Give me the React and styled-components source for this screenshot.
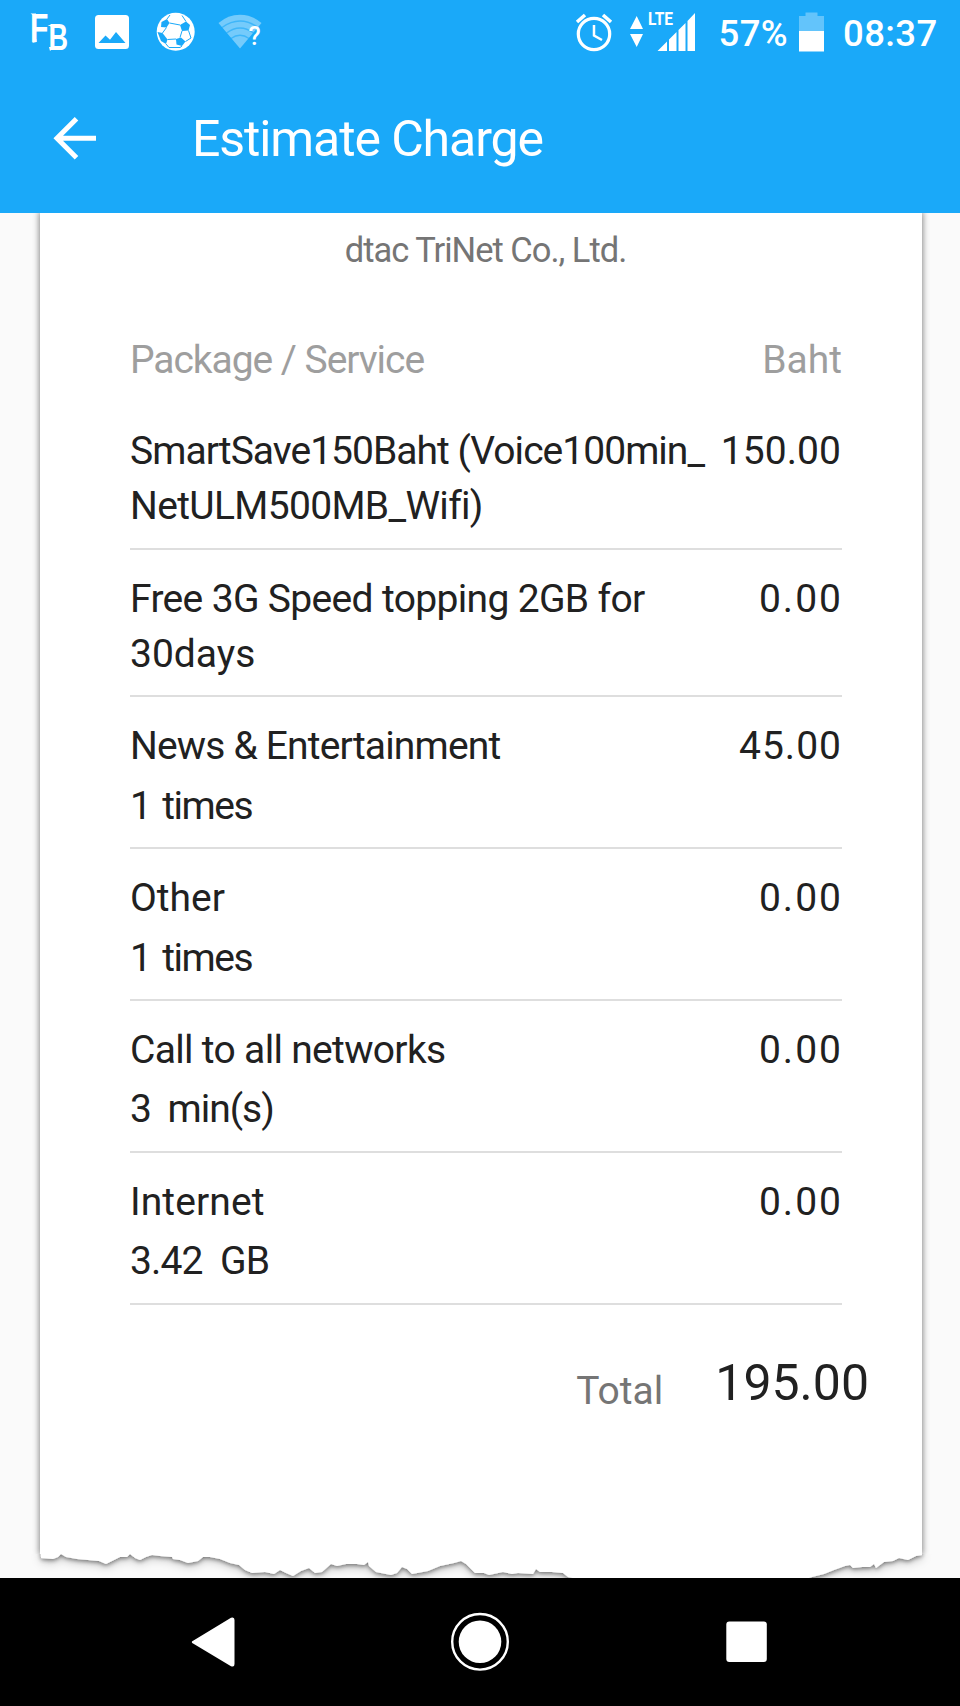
import React from "react";
import styled, { createGlobalStyle } from "styled-components";

const GlobalStyle = createGlobalStyle`
  * {
    box-sizing: border-box;
  }
  body {
    margin: 0;
    background: #fafafa;
    font-family: Roboto, "Liberation Sans", sans-serif;
  }
`;

const BLUE = "#1aa9f9";

const Screen = styled.div`
  width: 960px;
  height: 1706px;
  display: flex;
  flex-direction: column;
  overflow: hidden;
`;

const Header = styled.header`
  height: 213px;
  flex-shrink: 0;
  background: ${BLUE};
  color: white;
`;

const StatusBar = styled.div`
  height: 66px;
  display: flex;
  padding-left: 28px;
`;

const StatusIcon = styled.svg`
  width: ${({ $width }) => $width}px;
  height: 66px;
  flex-shrink: 0;
  margin-left: ${({ $push = false }) => ($push ? "auto" : "0")};
`;

const StatusText = styled.div`
  width: ${({ $width }) => $width}px;
  padding-left: ${({ $indent }) => $indent}px;
  font-size: 36.5px;
  font-weight: 500;
  line-height: 67px;
  letter-spacing: ${({ $tracking = 0 }) => $tracking}px;
  white-space: nowrap;
`;

const AppBar = styled.div`
  height: 147px;
  display: flex;
  align-items: flex-start;
  padding: 42px 0 0 47px;
`;

const BackIcon = styled.svg`
  width: 56px;
  height: 60px;
`;

const Title = styled.h1`
  margin: 1px 0 0 89px;
  font-size: 50px;
  font-weight: 400;
  line-height: 60px;
  letter-spacing: -1.1px;
`;

const Content = styled.main`
  flex: 1;
  min-height: 0;
  overflow: hidden;
  background: #fafafa;
`;

const Receipt = styled.section`
  height: 1341px;
  margin: 0 38px 0 40px;
  padding: 0 80px 0 90px;
  background: white;
  box-shadow: 0 0 6px 1px rgba(0, 0, 0, 0.45);
  clip-path: inset(0 -12px 0 -12px);
`;

const TornEdge = styled.svg`
  display: block;
  width: 960px;
  height: 24px;
`;

const Company = styled.div`
  padding-top: 15px;
  margin-right: 1px;
  text-align: center;
  font-size: 34.5px;
  line-height: 44px;
  letter-spacing: -1px;
  color: #757575;
`;

const ColumnTitles = styled.div`
  display: flex;
  justify-content: space-between;
  margin-top: 60px;
  height: 70.2px;
  font-size: 39px;
  line-height: 56px;
  color: #9e9e9e;
`;

const Row = styled.div`
  display: flex;
  justify-content: space-between;
  padding: 22px 0 13.6px;
  border-bottom: 2px solid #dedede;
  font-size: 39px;
  line-height: 55px;
  color: #212121;
`;

const Line = styled.div`
  letter-spacing: ${({ $tracking = 0 }) => $tracking}px;
  white-space: nowrap;
`;

const Usage = styled(Line)`
  margin-top: 4.3px;
  word-spacing: ${({ $gap = 0 }) => $gap}px;
  white-space: pre;
`;

const Amount = styled(Line)`
  margin-right: ${({ $tracking = 0 }) => 1 - $tracking}px;
`;

const TotalRow = styled.div`
  display: flex;
  justify-content: flex-end;
  align-items: flex-start;
  margin: 43.4px -27px 0 0;
  line-height: 70px;
`;

const TotalLabel = styled.span`
  padding-top: 8px;
  font-size: 39px;
  color: #757575;
`;

const TotalValue = styled.span`
  margin-left: 52px;
  font-size: 50px;
  color: #212121;
`;

const NavBar = styled.nav`
  height: 128px;
  flex-shrink: 0;
  display: flex;
  align-items: center;
  gap: 207px;
  padding-left: 183px;
  background: black;
`;

const NavIcon = styled.svg`
  width: 60px;
  height: 60px;
`;

const items = [
  {
    lines: [
      { text: "SmartSave150Baht (Voice100min_", tracking: -0.97 },
      { text: "NetULM500MB_Wifi)", tracking: -0.66 },
    ],
    amount: "150.00",
    amountTracking: 0.1,
  },
  {
    lines: [
      { text: "Free 3G Speed topping 2GB for", tracking: -0.66 },
      { text: "30days" },
    ],
    amount: "0.00",
    amountTracking: 2,
  },
  {
    lines: [{ text: "News & Entertainment", tracking: -0.83 }],
    usage: { text: "1  times", tracking: -1.5, gap: -2.2 },
    amount: "45.00",
    amountTracking: 1,
  },
  {
    lines: [{ text: "Other" }],
    usage: { text: "1  times", tracking: -1.5, gap: -2.2 },
    amount: "0.00",
    amountTracking: 2,
  },
  {
    lines: [{ text: "Call to all networks", tracking: -0.68 }],
    usage: { text: "3  min(s)", tracking: -1, gap: -0.4 },
    amount: "0.00",
    amountTracking: 2,
  },
  {
    lines: [{ text: "Internet", tracking: 0.1 }],
    usage: { text: "3.42  GB", tracking: -0.9, gap: 0 },
    amount: "0.00",
    amountTracking: 2,
  },
];

// Bottom outline of the paper, left to right
const tornPoints =
  "41,8 53,9 58,7 61,4 66,7 77,9 88,10 99,11 106,14 114,10 120,7 127,7 130,4 135,8 140,10 146,7 152,5 160,6 172,7 173,9 180,10 188,13 198,11 203,7 210,7 220,9 230,13 239,15 245,20 252,23 265,22 274,24 280,20 286,23 293,26 301,21 309,18 315,23 322,22 331,14 337,16 346,14 357,14 364,15 368,12 369,16 376,22 391,25 397,23 402,17 407,19 412,24 428,21 440,16 454,13 461,11 466,14 475,23 484,23 489,25 503,22 512,24 518,23 533,24 536,19 540,22 552,22 563,23 568,27 600,34 790,34 812,27 824,24 834,20 845,16 850,15 853,18 862,17 870,17 874,14 876,18 884,12 893,11 899,8 908,10 916,6 922,5";

const StatusIcons = () => (
  <>
    <StatusIcon $width={54} viewBox="28 0 54 66" fill="white">
      <text
        x="30"
        y="42"
        fontFamily="Liberation Sans"
        fontWeight="bold"
        fontSize="40"
        textLength="38"
        lengthAdjust="spacingAndGlyphs"
      >
        F<tspan dy="8" fontSize="36">B</tspan>
      </text>
      <path d="M30.5 13.5 H36 V17 Z M32 43 L36.5 39 V42 Z M47.5 25 H54 V28 Z M49 47 H54 L50 51 Z" />
    </StatusIcon>
    <StatusIcon $width={62} viewBox="82 0 62 66">
      <rect x="95" y="15" width="34" height="34" rx="3.5" fill="white" />
      <path d="M98.5 43 L105.5 35.5 L110 39.8 L116 32 L125.5 43 Z" fill={BLUE} />
    </StatusIcon>
    <StatusIcon $width={62} viewBox="144 0 62 66">
      <circle cx="175.7" cy="31.7" r="19" fill="white" />
      <g fill={BLUE}>
        <path d="M161.5 22 L167 19 L169.5 23 L166.5 27.5 L161 27 Z" />
        <path d="M180 25 L186 21.5 L190 25 L188.5 30.5 L182 31 Z" />
        <path d="M176 39 L181 37.5 L185.5 41.5 L182 46 L176.5 44.5 Z" />
        <path d="M157.5 32 L162.5 33 L167.5 39.5 L166 44 L161 41 Z" />
      </g>
      <path
        d="M169.5 23 L180 25 M182 31 L180 37.5 M176 39 L167.5 39.5 M162.5 33 L166.5 27.5 M167 19 L170 15 M182 15.5 L186 21.5 M185.5 41.5 L191 38 L188.5 30.5 M166 44 L169 47.5 H180 L182 46"
        fill="none"
        stroke={BLUE}
        strokeWidth="1"
      />
    </StatusIcon>
    <StatusIcon $width={66} viewBox="206 0 66 66">
      <path d="M240 48.5 L218.5 23 Q228 14.7 240 14.7 Q252 14.7 261.5 23 Z" fill="white" opacity="0.4" />
      <path
        d="M222 27.5 Q240 14.5 258 27.5 M226.5 33 Q240 23 253.5 33 M231 38.5 Q240 32 249 38.5"
        fill="none"
        stroke={BLUE}
        strokeOpacity="0.6"
        strokeWidth="1.5"
      />
      <text x="248.5" y="44.5" fontSize="25" fontWeight="500" fontFamily="Roboto" fill="white">?</text>
    </StatusIcon>
    <StatusIcon $width={46} $push viewBox="572 0 46 66" fill="none" stroke="white">
      <circle cx="594" cy="34" r="15.7" strokeWidth="3.2" />
      <path d="M594 25 V35.5 L602 40" strokeWidth="2.5" />
      <path d="M577 22 L585 15 M611 22 L603 15" strokeWidth="3.6" />
    </StatusIcon>
    <StatusIcon $width={92} viewBox="618 0 92 66" fill="white">
      <path d="M636.7 16 L643 29 H630 Z M636.7 47 L643 34 H630 Z" />
      <text x="648" y="25" fontSize="19" fontWeight="700" fontFamily="Roboto" textLength="25" lengthAdjust="spacingAndGlyphs">LTE</text>
      <path d="M657.5 51 L667 41.5 V51 Z M669 39.5 L676.5 32 V51 H669 Z M678.5 30 L685.5 23 V51 H678.5 Z M687.5 21 L695 13 V51 H687.5 Z" />
    </StatusIcon>
  </>
);

export default () => {
  return (
    <>
      <GlobalStyle />
      <Screen>
        <Header>
          <StatusBar>
            <StatusIcons />
            <StatusText $width={82} $indent={8.5} $tracking={0.4}>57%</StatusText>
            <StatusIcon $width={44} viewBox="792 0 44 66" fill="white">
              <path d="M799 16 H805.5 V12.5 H817.5 V16 H824 V31 H799 Z" opacity="0.32" />
              <rect x="799" y="31" width="25" height="20.5" />
            </StatusIcon>
            <StatusText $width={124} $indent={7} $tracking={0.4}>08:37</StatusText>
          </StatusBar>
          <AppBar>
            <BackIcon viewBox="47 108 56 60" fill="none" stroke="white" strokeWidth="5">
              <path d="M96 138.3 H57 M76.5 118.8 L57 138.3 L76.5 157.8" />
            </BackIcon>
            <Title>Estimate Charge</Title>
          </AppBar>
        </Header>

        <Content>
          <Receipt>
            <Company>dtac TriNet Co., Ltd.</Company>
            <ColumnTitles>
              <Line $tracking={-1.05}>Package / Service</Line>
              <Line>Baht</Line>
            </ColumnTitles>
            {items.map((item, index) => (
              <Row key={index}>
                <div>
                  {item.lines.map((line) => (
                    <Line key={line.text} $tracking={line.tracking}>{line.text}</Line>
                  ))}
                  {item.usage && (
                    <Usage $tracking={item.usage.tracking} $gap={item.usage.gap}>{item.usage.text}</Usage>
                  )}
                </div>
                <Amount $tracking={item.amountTracking}>{item.amount}</Amount>
              </Row>
            ))}
            <TotalRow>
              <TotalLabel>Total</TotalLabel>
              <TotalValue>195.00</TotalValue>
            </TotalRow>
          </Receipt>
          <TornEdge viewBox="0 4 960 24">
            <defs>
              <filter id="paper-shadow" x="-5%" y="-50%" width="110%" height="200%">
                <feDropShadow dx="0" dy="1.5" stdDeviation="2" floodOpacity="0.45" />
                <feDropShadow dx="0" dy="3" stdDeviation="4" floodOpacity="0.2" />
              </filter>
            </defs>
            <polygon points={`40,-20 ${tornPoints} 922,-20`} fill="white" filter="url(#paper-shadow)" />
          </TornEdge>
        </Content>

        <NavBar>
          <NavIcon viewBox="0 0 60 60" fill="white">
            <path d="M10.5 28.5 L48 5.8 Q51.5 4.5 51.5 8 V52 Q51.5 55.5 48 54.2 L10.5 31.8 Q7 30 10.5 28.5 Z" />
          </NavIcon>
          <NavIcon viewBox="0 0 60 60">
            <circle cx="30" cy="29.8" r="27.8" fill="none" stroke="white" strokeWidth="2.4" />
            <circle cx="30" cy="29.8" r="21.3" fill="white" />
          </NavIcon>
          <NavIcon viewBox="0 0 60 60" fill="white">
            <rect x="9.3" y="9.5" width="40.5" height="40.5" rx="3" />
          </NavIcon>
        </NavBar>
      </Screen>
    </>
  );
};
